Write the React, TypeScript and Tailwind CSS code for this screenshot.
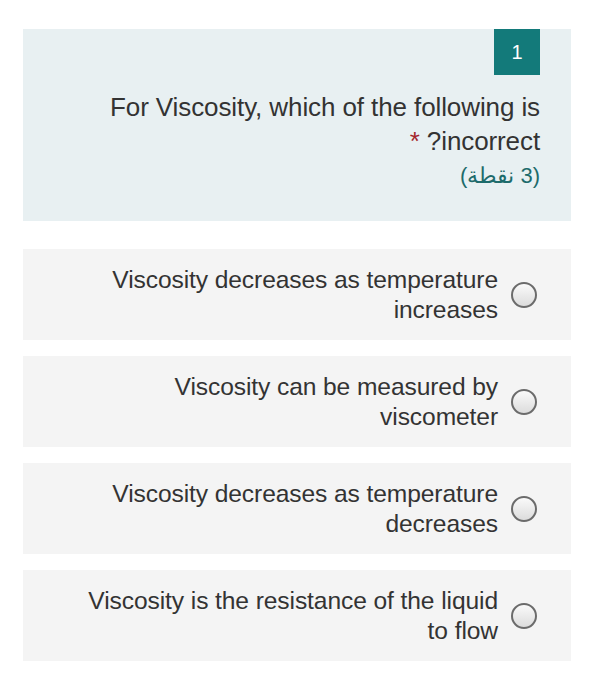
import React from "react";

const options: string[][] = [
  ["Viscosity decreases as temperature", "increases"],
  ["Viscosity can be measured by", "viscometer"],
  ["Viscosity decreases as temperature", "decreases"],
  ["Viscosity is the resistance of the liquid", "to flow"],
];

export default function App() {
  return (
    <div
      dir="rtl"
      className="min-h-[700px] bg-white pt-[29px] pl-[23px] pr-[22px] text-[#333333]"
      style={{ fontFamily: '"Liberation Sans", Arial, sans-serif' }}
    >
      <div className="bg-[#e8f0f2] pr-[31px] pl-6 pb-[27px]">
        <div className="flex">
          <div className="flex h-[46px] w-[46px] items-center justify-center bg-[#137a7a] text-[20px] text-white">
            1
          </div>
        </div>
        <div className="mt-[15px] text-[26px] leading-[34px] tracking-[-0.1px]">
          For Viscosity, which of the following is
          <br />
          incorrect? <span className="text-[#a4262c]">*</span>
        </div>
        <div className="text-[22px] leading-[36px] text-[#1d6b6b]">(3 نقطة)</div>
      </div>

      <div className="mt-[28px] flex flex-col gap-[16px]">
        {options.map((o, i) => (
          <div key={i} className="flex h-[91px] items-center gap-[13px] bg-[#f4f4f4] pr-[34px]">
            <span className="h-[26px] w-[26px] shrink-0 rounded-full border-2 border-[#6b6b6b] bg-gradient-to-b from-[#fafafa] to-[#dcdcdc]" />
            <div className="text-[24.6px] leading-[30px] tracking-[-0.1px]">
              {o[0]}
              <br />
              {o[1]}
            </div>
          </div>
        ))}
      </div>
    </div>
  );
}
